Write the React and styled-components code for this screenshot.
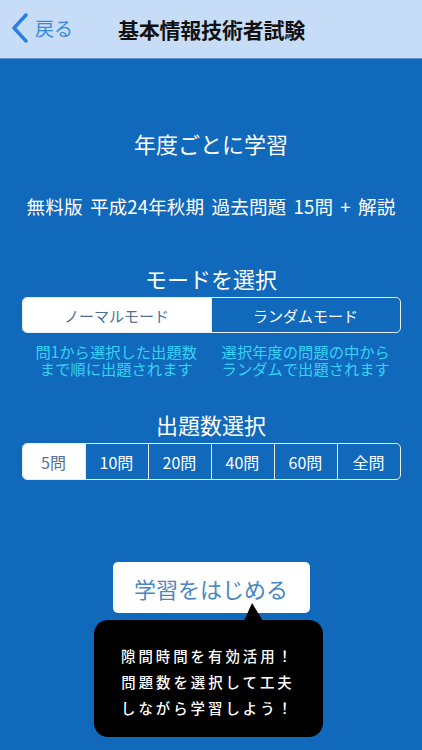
import styled, { createGlobalStyle } from "styled-components";
import { useState } from "react";

const GlobalStyle = createGlobalStyle`
  html, body {
    margin: 0;
    padding: 0;
    background: #1169bb;
  }
  body {
    font-family: "Noto Sans CJK JP", "Noto Sans", sans-serif;
  }
`;

const modes = [
  { label: "ノーマルモード", desc: ["問1から選択した出題数", "まで順に出題されます"] },
  { label: "ランダムモード", desc: ["選択年度の問題の中から", "ランダムで出題されます"] },
];

const counts = ["5問", "10問", "20問", "40問", "60問", "全問"];

const App = () => {
  const [mode, setMode] = useState(0);
  const [count, setCount] = useState(0);

  return (
    <>
      <GlobalStyle />
      <Header>
        <BackButton>
          <svg width="18" height="30" viewBox="0 0 18 30">
            <polyline
              points="15,2 3,15 15,28"
              fill="none"
              stroke="#2a7fe0"
              strokeWidth="3.4"
              strokeLinecap="round"
              strokeLinejoin="round"
            />
          </svg>
          <BackLabel>戻る</BackLabel>
        </BackButton>
        <HeaderTitle>基本情報技術者試験</HeaderTitle>
      </Header>
      <Main>
        <Heading>年度ごとに学習</Heading>
        <SubTitle>無料版 平成24年秋期 過去問題 15問 + 解説</SubTitle>

        <SectionHeading $top={44}>モードを選択</SectionHeading>
        <Segmented>
          {modes.map((m, i) => (
            <Segment
              key={m.label}
              $active={mode === i}
              $height={37}
              $size={15}
              onClick={() => setMode(i)}
            >
              {m.label}
            </Segment>
          ))}
        </Segmented>
        <DescRow>
          {modes.map((m) => (
            <Desc key={m.label}>
              {m.desc[0]}
              <br />
              {m.desc[1]}
            </Desc>
          ))}
        </DescRow>

        <SectionHeading $top={33}>出題数選択</SectionHeading>
        <Segmented>
          {counts.map((c, i) => (
            <Segment
              key={c}
              $active={count === i}
              $height={38}
              $size={16}
              onClick={() => setCount(i)}
            >
              {c}
            </Segment>
          ))}
        </Segmented>

        <StartButton>学習をはじめる</StartButton>
        <Bubble>
          <Pointer />
          隙間時間を有効活用！
          <br />
          問題数を選択して工夫
          <br />
          しながら学習しよう！
        </Bubble>
      </Main>
    </>
  );
};

const Header = styled.header`
  position: relative;
  height: 58px;
  background: #c7dcf6;
  border-bottom: 1px solid #5b8fca;
  display: flex;
  align-items: center;
  justify-content: center;
`;

const BackButton = styled.div`
  position: absolute;
  left: 11px;
  top: 13px;
  display: flex;
  align-items: center;
  gap: 6px;
`;

const BackLabel = styled.span`
  font-size: 19px;
  color: #3b8ade;
  line-height: 30px;
`;

const HeaderTitle = styled.h1`
  margin: 0 0 0 1px;
  font-size: 21px;
  font-weight: 700;
  color: #111;
  letter-spacing: -0.2px;
`;

const Main = styled.main`
  background: #1169bb;
  min-height: calc(100vh - 59px);
  display: flex;
  flex-direction: column;
  align-items: center;
  padding-top: 69px;
  box-sizing: border-box;
  color: #fff;
`;

const Heading = styled.h2`
  margin: 0;
  font-size: 22px;
  font-weight: 400;
  line-height: 30px;
`;

const SubTitle = styled.p`
  margin: 35px 0 0;
  font-size: 18.6px;
  line-height: 26px;
  word-spacing: 3px;
  letter-spacing: 0.1px;
`;

const SectionHeading = styled.h3`
  margin: ${(p) => p.$top}px 0 4px;
  font-size: 22px;
  font-weight: 400;
  line-height: 30px;
`;

const Segmented = styled.div`
  width: 379px;
  display: flex;
  border: 1.5px solid #e6eef8;
  border-radius: 5px;
  overflow: hidden;
  box-sizing: border-box;
`;

const Segment = styled.button`
  flex: 1;
  height: ${(p) => p.$height - 3}px;
  border: none;
  border-left: 1.5px solid #e6eef8;
  padding: 0;
  background: ${(p) => (p.$active ? "#fff" : "transparent")};
  color: ${(p) => (p.$active ? "#4f6f95" : "#fff")};
  font-family: inherit;
  font-size: ${(p) => p.$size}px;
  cursor: pointer;

  &:first-child {
    border-left: none;
  }
`;

const DescRow = styled.div`
  width: 379px;
  display: flex;
  margin-top: 10px;
`;

const Desc = styled.p`
  flex: 1;
  margin: 0;
  text-align: center;
  font-size: 15.3px;
  line-height: 16.5px;
  color: #36d2fa;
`;

const StartButton = styled.button`
  margin-top: 82px;
  width: 197px;
  height: 51px;
  border: none;
  border-radius: 5px;
  background: #fff;
  color: #4b86c4;
  font-family: inherit;
  font-size: 22px;
  cursor: pointer;
`;

const Bubble = styled.div`
  position: relative;
  margin: 7px 6px 0 0;
  width: 229px;
  box-sizing: border-box;
  padding: 23px 0 16px;
  background: #000;
  border-radius: 14px;
  text-align: center;
  font-size: 14.4px;
  font-weight: 500;
  letter-spacing: 3px;
  line-height: 26px;
  color: #fff;
`;

const Pointer = styled.span`
  position: absolute;
  left: 150px;
  top: -17px;
  width: 0;
  height: 0;
  border-left: 8px solid transparent;
  border-right: 11px solid transparent;
  border-bottom: 18px solid #000;
`;

export default App;
